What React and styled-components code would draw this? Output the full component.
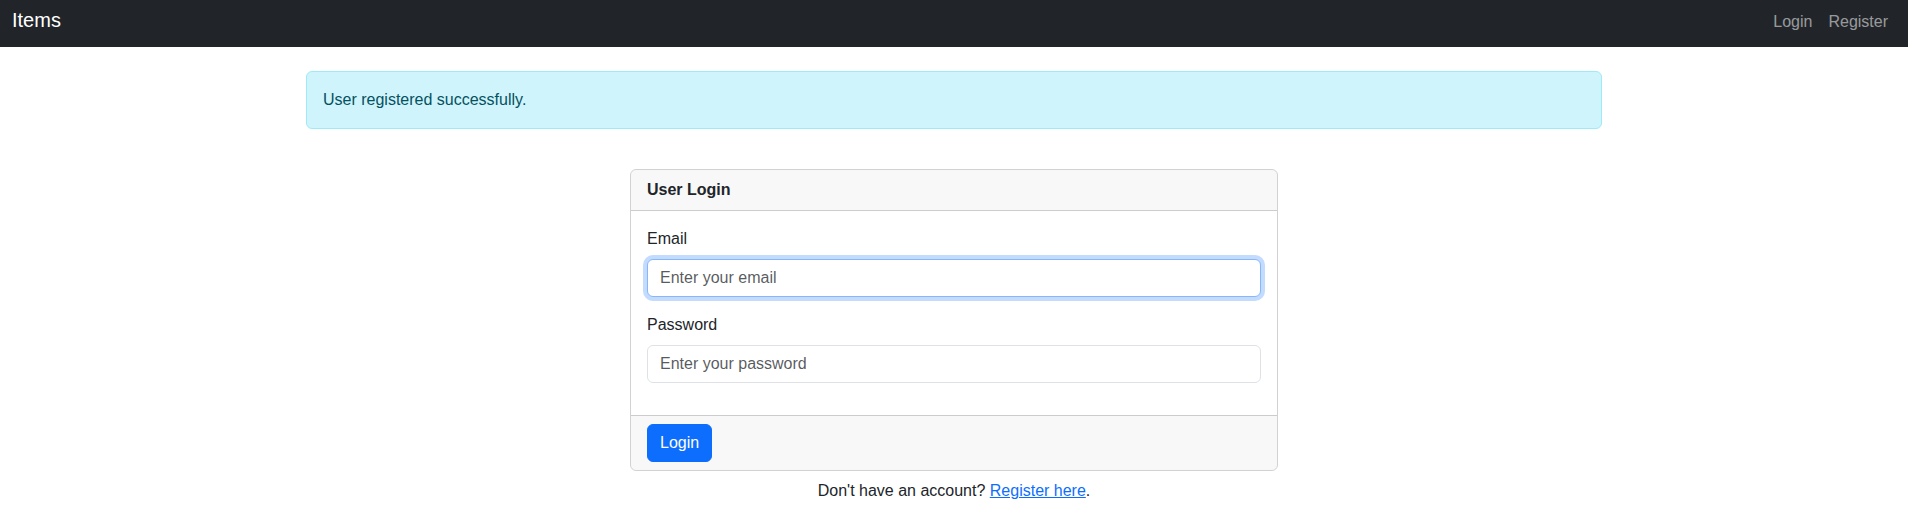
import React from 'react'
import styled, { createGlobalStyle } from 'styled-components'

const GlobalStyle = createGlobalStyle`
  *, *::before, *::after {
    box-sizing: border-box;
  }
  body {
    margin: 0;
    font-family: 'Liberation Sans', Arial, sans-serif;
    font-size: 16px;
    line-height: 1.5;
    color: #212529;
    background: #fff;
  }
`

const Navbar = styled.nav`
  display: flex;
  align-items: center;
  justify-content: space-between;
  height: 47px;
  padding: 0 12px;
  background: #212529;
`

const Brand = styled.a`
  font-size: 20px;
  line-height: 30px;
  color: #fff;
  text-decoration: none;
  margin-top: -7px;
`

const NavLinks = styled.div`
  display: flex;
  margin-top: -4px;
`

const NavLink = styled.a`
  padding: 8px;
  color: rgba(255, 255, 255, 0.55);
  text-decoration: none;
`

const Container = styled.div`
  max-width: 1320px;
  margin: 24px auto 0;
  padding: 0 12px;
`

const Alert = styled.div`
  padding: 16px;
  margin-bottom: 16px;
  color: #055160;
  background: #cff4fc;
  border: 1px solid #9eeaf9;
  border-radius: 6px;
`

const Row = styled.div`
  display: flex;
  justify-content: center;
  padding-top: 24px;
`

const Column = styled.div`
  width: 648px;
`

const Card = styled.div`
  border: 1px solid rgba(0, 0, 0, 0.175);
  border-radius: 6px;
  overflow: hidden;
`

const CardHeader = styled.div`
  padding: 8px 16px;
  background: rgba(33, 37, 41, 0.03);
  border-bottom: 1px solid rgba(0, 0, 0, 0.175);
  font-weight: bold;
`

const CardBody = styled.div`
  padding: 16px;
`

const CardFooter = styled.div`
  padding: 8px 16px;
  background: rgba(33, 37, 41, 0.03);
  border-top: 1px solid rgba(0, 0, 0, 0.175);
`

const Field = styled.div`
  margin-bottom: 16px;
`

const Label = styled.label`
  display: block;
  margin-bottom: 8px;
`

const Input = styled.input`
  display: block;
  width: 100%;
  padding: 6px 12px;
  font: inherit;
  color: #212529;
  background: #fff;
  border: 1px solid ${p => (p.$focused ? '#86b7fe' : '#dee2e6')};
  border-radius: 6px;
  outline: none;
  box-shadow: ${p => (p.$focused ? '0 0 0 4px rgba(13, 110, 253, 0.25)' : 'none')};
  &::placeholder {
    color: rgba(33, 37, 41, 0.75);
  }
`

const Button = styled.button`
  padding: 6px 12px;
  font: inherit;
  color: #fff;
  background: #0d6efd;
  border: 1px solid #0d6efd;
  border-radius: 6px;
  cursor: pointer;
`

const Note = styled.p`
  margin: 8px 0 0;
  text-align: center;
`

const Link = styled.a`
  color: #0d6efd;
  text-decoration: underline;
`

export default function App() {
  return (
    <>
      <GlobalStyle />
      <Navbar>
        <Brand href="#">Items</Brand>
        <NavLinks>
          <NavLink href="#">Login</NavLink>
          <NavLink href="#">Register</NavLink>
        </NavLinks>
      </Navbar>
      <Container>
        <Alert>User registered successfully.</Alert>
        <Row>
          <Column>
            <Card>
              <CardHeader>User Login</CardHeader>
              <CardBody>
                <Field>
                  <Label>Email</Label>
                  <Input type="email" placeholder="Enter your email" $focused />
                </Field>
                <Field>
                  <Label>Password</Label>
                  <Input type="password" placeholder="Enter your password" />
                </Field>
              </CardBody>
              <CardFooter>
                <Button>Login</Button>
              </CardFooter>
            </Card>
            <Note>
              Don't have an account? <Link href="#">Register here</Link>.
            </Note>
          </Column>
        </Row>
      </Container>
    </>
  )
}
